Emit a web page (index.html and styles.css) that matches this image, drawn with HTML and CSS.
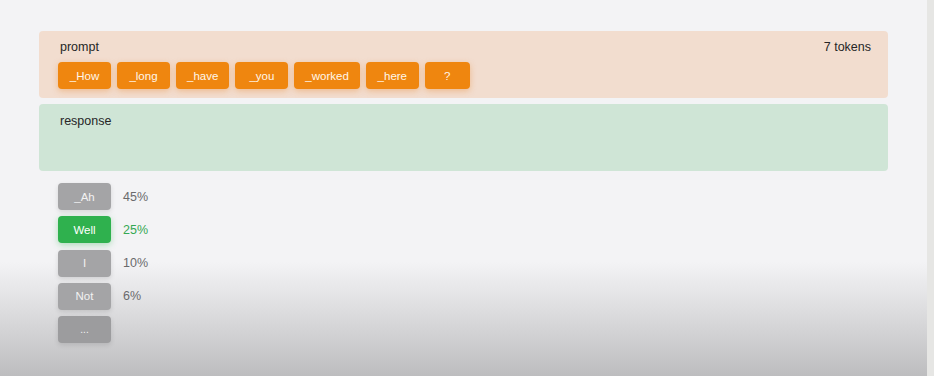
FILE: index.html
```html
<!DOCTYPE html>
<html lang="en">
<head>
    <meta charset="UTF-8">
    <meta name="viewport" content="width=device-width, initial-scale=1.0">
    <title>Next token prediction</title>
    <link rel="stylesheet" href="styles.css">
</head>
<body>
    <div class="page">
        <main class="main">
            <section class="panel prompt">
                <div class="panel-head">
                    <span class="label">prompt</span>
                    <span class="count">7 tokens</span>
                </div>
                <div class="tokens">
                    <span class="token">_How</span>
                    <span class="token">_long</span>
                    <span class="token">_have</span>
                    <span class="token">_you</span>
                    <span class="token">_worked</span>
                    <span class="token">_here</span>
                    <span class="token short">?</span>
                </div>
            </section>
            <section class="panel response">
                <div class="panel-head">
                    <span class="label">response</span>
                </div>
            </section>
            <div class="candidates">
                <div class="candidate">
                    <span class="choice">_Ah</span>
                    <span class="prob">45%</span>
                </div>
                <div class="candidate picked">
                    <span class="choice">Well</span>
                    <span class="prob">25%</span>
                </div>
                <div class="candidate">
                    <span class="choice">I</span>
                    <span class="prob">10%</span>
                </div>
                <div class="candidate">
                    <span class="choice">Not</span>
                    <span class="prob">6%</span>
                </div>
                <div class="candidate">
                    <span class="choice more">...</span>
                </div>
            </div>
        </main>
        <div class="strip"></div>
    </div>
</body>
</html>
```

FILE: styles.css
```css
html, body {
    margin: 0;
    height: 100%;
}
body {
    font-family: 'Liberation Sans', Arial, sans-serif;
    color: #262626;
    background-color: #f3f3f5;
}
.page {
    display: flex;
    height: 100%;
}
.main {
    flex: 1;
    padding: 31px 39px 0 39px;
    background: linear-gradient(to bottom, #f3f3f5 0, #f3f3f5 262px, #e2e2e4 300px, #bdbdbf 376px);
}
.strip {
    width: 7px;
    background-color: #e6e6e4;
}
.panel {
    border-radius: 4px;
    box-sizing: border-box;
    padding: 8px 17px 9px 19px;
}
.prompt {
    background-color: #f2ddcf;
    height: 67px;
}
.response {
    background-color: #cfe5d6;
    height: 67px;
    margin-top: 6px;
}
.panel-head {
    display: flex;
    justify-content: space-between;
    font-size: 12.5px;
    line-height: 16px;
    padding-left: 2px;
}
.response .panel-head {
    padding-top: 1px;
}
.tokens {
    display: flex;
    gap: 6px;
    margin-top: 7px;
}
.token {
    height: 27px;
    min-width: 53px;
    box-sizing: border-box;
    padding: 0 11px;
    display: flex;
    align-items: center;
    justify-content: center;
    background-color: #ef860f;
    color: #fff6ea;
    font-size: 11.5px;
    border-radius: 4px;
    box-shadow: 0 2px 6px rgba(230, 120, 20, 0.35);
}
.token.short {
    min-width: 45px;
}
.candidates {
    display: flex;
    flex-direction: column;
    gap: 6.25px;
    margin-top: 12px;
    padding-left: 19px;
}
.candidate {
    display: flex;
    align-items: center;
    gap: 12px;
}
.choice {
    width: 53px;
    height: 27px;
    display: flex;
    align-items: center;
    justify-content: center;
    background-color: #a4a4a6;
    color: #f2f2f2;
    font-size: 11.5px;
    border-radius: 4px;
    box-shadow: 0 2px 5px rgba(0, 0, 0, 0.12);
}
.choice.more {
    background-color: #9c9c9e;
    font-size: 10px;
}
.prob {
    font-size: 12.5px;
    color: #6a6a6c;
}
.picked .choice {
    background-color: #2fb14e;
    color: #ffffff;
    box-shadow: 0 2px 6px rgba(47, 177, 78, 0.35);
}
.picked .prob {
    color: #34a853;
}
```
